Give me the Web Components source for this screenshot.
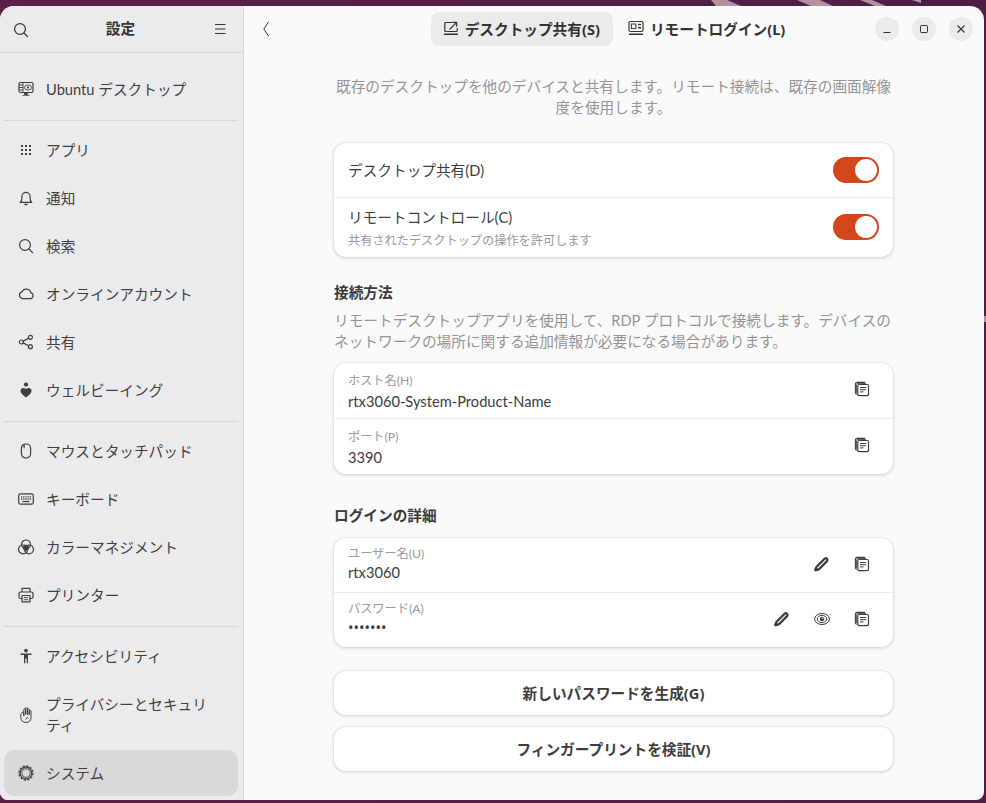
<!DOCTYPE html>
<html lang="ja"><head><meta charset="utf-8"><title>設定</title>
<style>
html,body{margin:0;padding:0;height:803px;overflow:hidden;background:#5a2048}
body{font-family:"Lato","Noto Sans CJK JP",sans-serif;font-size:14.67px;color:#3d3d3d}
</style></head><body>
<desk-top>
<settings-window>
  <side-bar slot="side">
    <nav-group>
      <nav-item icon="desktop">Ubuntu デスクトップ</nav-item>
    </nav-group>
    <nav-group>
      <nav-item icon="apps">アプリ</nav-item>
      <nav-item icon="bell">通知</nav-item>
      <nav-item icon="search">検索</nav-item>
      <nav-item icon="cloud">オンラインアカウント</nav-item>
      <nav-item icon="share">共有</nav-item>
      <nav-item icon="wellbeing">ウェルビーイング</nav-item>
    </nav-group>
    <nav-group>
      <nav-item icon="mouse">マウスとタッチパッド</nav-item>
      <nav-item icon="keyboard">キーボード</nav-item>
      <nav-item icon="color">カラーマネジメント</nav-item>
      <nav-item icon="printer">プリンター</nav-item>
    </nav-group>
    <nav-group last>
      <nav-item icon="a11y">アクセシビリティ</nav-item>
      <nav-item icon="hand" tall>プライバシーとセキュリティ</nav-item>
      <nav-item icon="gear" selected>システム</nav-item>
    </nav-group>
  </side-bar>
  <content-head slot="head"></content-head>
  <content-pane slot="main">
    <muted-text center>既存のデスクトップを他のデバイスと共有します。リモート接続は、既存の画面解像度を使用します。</muted-text>
    <pref-card style="margin-top:25px">
      <pref-row h="54"><span>デスクトップ共有(D)</span><tog-switch slot="end"></tog-switch></pref-row>
      <pref-row h="59"><span>リモートコントロール(C)</span><small-note>共有されたデスクトップの操作を許可します</small-note><tog-switch slot="end" style="margin-bottom:1px"></tog-switch></pref-row>
    </pref-card>
    <sec-title style="margin-top:25px">接続方法</sec-title>
    <muted-text style="margin-top:7px">リモートデスクトップアプリを使用して、RDP プロトコルで接続します。デバイスのネットワークの場所に関する追加情報が必要になる場合があります。</muted-text>
    <pref-card style="margin-top:11px">
      <pref-row h="55" field pt="4" es="4"><field-label>ホスト名(H)</field-label><field-value>rtx3060-System-Product-Name</field-value><icon-btn slot="end" icon="copy"></icon-btn></pref-row>
      <pref-row h="55" field pt="4" es="4"><field-label>ポート(P)</field-label><field-value>3390</field-value><icon-btn slot="end" icon="copy"></icon-btn></pref-row>
    </pref-card>
    <sec-title style="margin-top:31px">ログインの詳細</sec-title>
    <pref-card style="margin-top:12px">
      <pref-row h="54" field pb="2" es="2"><field-label>ユーザー名(U)</field-label><field-value style="margin-top:1px">rtx3060</field-value><icon-btn slot="end" icon="pencil"></icon-btn><icon-btn slot="end" icon="copy"></icon-btn></pref-row>
      <pref-row h="54" field pb="2" es="2"><field-label>パスワード(A)</field-label><field-value style="margin-top:1px;font-family:'Noto Sans',sans-serif">•••••••</field-value><icon-btn slot="end" icon="pencil"></icon-btn><icon-btn slot="end" icon="eye"></icon-btn><icon-btn slot="end" icon="copy"></icon-btn></pref-row>
    </pref-card>
    <wide-button style="margin-top:24px">新しいパスワードを生成(G)</wide-button>
    <wide-button style="margin-top:12px">フィンガープリントを検証(V)</wide-button>
  </content-pane>
</settings-window>
</desk-top>
<script>
const S='fill="none" stroke="currentColor" stroke-width="1.2" stroke-linecap="round" stroke-linejoin="round"';
const ICONS={
search:`<circle cx="7" cy="7" r="5.4" ${S}/><path d="M11 11l3.6 3.6" ${S}/>`,
menu:`<path d="M3 3.500h10.500M3 8h10.500M3 12.500h10.500" fill="none" stroke="currentColor" stroke-width="1.100"/>`,
desktop:`<rect x="1" y="1.500" width="14" height="10" rx="1.500" ${S}/><path d="M5 1.500v10M1 4h4M1 6.500h4M1 9h4" fill="none" stroke="currentColor" stroke-width=".9"/><ellipse cx="10" cy="6.500" rx="3.600" ry="2.500" fill="none" stroke="currentColor" stroke-width=".9"/><circle cx="10" cy="6.500" r="1.100" fill="currentColor"/><path d="M6.500 12h3v1.600h-3zM4.500 14.400h7" fill="currentColor" stroke="currentColor" stroke-width=".8"/>`,
apps:`<g fill="currentColor"><rect x="3" y="3" width="2" height="2"/><rect x="7" y="3" width="2" height="2"/><rect x="11" y="3" width="2" height="2"/><rect x="3" y="7" width="2" height="2"/><rect x="7" y="7" width="2" height="2"/><rect x="11" y="7" width="2" height="2"/><rect x="3" y="11" width="2" height="2"/><rect x="7" y="11" width="2" height="2"/><rect x="11" y="11" width="2" height="2"/></g>`,
bell:`<path d="M2.200 12.400c1.300-1 1.700-2.400 1.700-4.400V6.500a4.100 4.100 0 0 1 8.200 0V8c0 2 .4 3.400 1.700 4.400z" ${S}/><path d="M6.400 14.500h3.200" fill="none" stroke="currentColor" stroke-width="1.600"/>`,
cloud:`<path d="M4.300 12.600h8a2.900 2.900 0 0 0 .6-5.700A4.700 4.700 0 0 0 4 5.800 3.500 3.500 0 0 0 4.300 12.600z" ${S}/>`,
share:`<circle cx="3.400" cy="8" r="2" ${S}/><circle cx="12.400" cy="3.300" r="2" ${S}/><circle cx="12.400" cy="12.700" r="2" ${S}/><path d="M5.200 7.100l5.400-2.900M5.200 8.900l5.400 2.900" ${S}/>`,
wellbeing:`<circle cx="8" cy="2.600" r="2.100" fill="currentColor"/><path d="M8 15.500C5 13.300 2.500 11.300 2.500 8.800 2.500 6 6.300 5.200 8 7.200c1.700-2 5.500-1.200 5.500 1.600 0 2.500-2.500 4.500-5.500 6.700z" fill="currentColor"/>`,
mouse:`<rect x="3.400" y="1" width="9.200" height="14" rx="4.400" ${S}/><path d="M6.200 1.300c0 2-.2 2.700 0 3.600" ${S}/>`,
keyboard:`<rect x=".7" y="2.800" width="14.600" height="10.400" rx="1.800" ${S}/><path d="M3 5.800h10M3 8h10" stroke="currentColor" stroke-width="1.300" stroke-dasharray="1 .8"/><path d="M4.500 10.500h7" stroke="currentColor" stroke-width="1.300"/>`,
color:`<circle cx="8" cy="5.400" r="4.400" ${S}/><circle cx="5" cy="10.400" r="4.400" ${S}/><circle cx="11" cy="10.400" r="4.400" ${S}/><circle cx="8" cy="8.800" r="3" fill="currentColor"/>`,
printer:`<path d="M4 5V1.400h8V5M4 11.500H2.500A1.500 1.500 0 0 1 1 10V6.500A1.500 1.500 0 0 1 2.500 5h11A1.500 1.500 0 0 1 15 6.500V10a1.500 1.500 0 0 1-1.500 1.500H12" ${S}/><rect x="4" y="8.500" width="8" height="6.300" ${S}/><path d="M5.800 10.600h4.400M5.800 12.700h4.400" fill="none" stroke="currentColor" stroke-width=".9"/>`,
a11y:`<circle cx="8" cy="2.600" r="1.900" fill="currentColor"/><path d="M2.500 5.600h11v1.300H10v8.300H8.700v-4.600H7.300v4.600H6V6.900H2.500z" fill="currentColor"/>`,
hand:`<path d="M2.800 7.200v3.500c0 2.900 2.200 4.800 5.200 4.800s5-2 5-4.900V4.300a.9.9 0 0 0-1.800 0V7.800 2.600a.9.9 0 0 0-1.800 0v5 -6a.9.9 0 0 0-1.800 0v6 -5a.9.9 0 0 0-1.800 0v6.400 -2.800a.9.9 0 0 0-2 0z" fill="none" stroke="currentColor" stroke-width="1" stroke-linejoin="round"/><path d="M7.600 12.400c1-.7 1.700-1.500 2-2.600" fill="none" stroke="currentColor" stroke-width="1"/>`,
gear:`<circle cx="8" cy="8" r="7" fill="none" stroke="currentColor" stroke-width="1.300" stroke-dasharray="2.300 1.360"/><circle cx="8" cy="8" r="5.900" fill="none" stroke="currentColor" stroke-width="1.200"/><circle cx="8" cy="8" r="4.300" fill="none" stroke="currentColor" stroke-width=".9"/>`,
back:`<path d="M8.500 1L3.800 8l4.700 7" fill="none" stroke="currentColor" stroke-width="1" stroke-linejoin="miter"/>`,
tabshare:`<path d="M14.200 8.500v2a1 1 0 0 1-1 1H2.800a1 1 0 0 1-1-1v-7a1 1 0 0 1 1-1h6" ${S}/><path d="M1 14.300h14" fill="none" stroke="currentColor" stroke-width="1.500"/><path d="M7 9l6.200-6.200M9.800 2.300h3.900v3.900" ${S}/>`,
tablogin:`<rect x="1" y="1.500" width="14" height="10" rx="1.500" ${S}/><rect x="3.400" y="4" width="4.400" height="4.600" fill="none" stroke="currentColor" stroke-width="1"/><path d="M10 4.500h3M10 7.800h3" stroke="currentColor" stroke-width="1.500"/><path d="M1 14.300h14" fill="none" stroke="currentColor" stroke-width="1.500"/>`,
min:`<path d="M4.500 11.500h7" fill="none" stroke="currentColor" stroke-width="1"/>`,
max:`<rect x="4.500" y="4.500" width="7" height="7" rx=".8" fill="none" stroke="currentColor" stroke-width="1"/>`,
close:`<path d="M4.500 4.500l7 7M11.500 4.500l-7 7" fill="none" stroke="currentColor" stroke-width="1.100"/>`,
copy:`<path d="M3 13.300A1.600 1.600 0 0 1 1.400 11.700V3A1.600 1.600 0 0 1 3 1.400h8" fill="none" stroke="currentColor" stroke-width="1.100"/><path d="M2.600 12V3.600A1.200 1.200 0 0 1 3.800 2.400h8.200" fill="none" stroke="currentColor" stroke-width=".9"/><rect x="3.800" y="3.500" width="10.700" height="11.200" rx="1.400" fill="#fff" stroke="currentColor" stroke-width="1.200"/><path d="M6 6.500h6.200M6 8.700h6.200M6 10.900h3.500" stroke="currentColor" stroke-width="1"/>`,
pencil:`<path d="M2.600 10.800l7.800-7.800c.8-.8 2-.8 2.600-.2s.6 1.800-.2 2.600l-7.800 7.800-3.200.8c-.4.100-.6-.1-.5-.5z" fill="none" stroke="currentColor" stroke-width="2.300"/><path d="M1.300 11.300l3.400 3.400-3.700.9z" fill="currentColor"/>`,
eye:`<ellipse cx="8" cy="8" rx="7.400" ry="5.500" fill="none" stroke="currentColor" stroke-width="1"/><ellipse cx="8" cy="8" rx="4.800" ry="3.600" fill="none" stroke="currentColor" stroke-width="1"/><circle cx="8" cy="8" r="2.200" fill="currentColor"/><circle cx="8.700" cy="7.300" r=".7" fill="#fff"/>`
};
customElements.define('x-icon',class extends HTMLElement{
  static get observedAttributes(){return['name'];}
  constructor(){super();this.attachShadow({mode:'open'}).innerHTML=`<style>:host{display:inline-flex;width:16px;height:16px;flex:none}svg{width:100%;height:100%;display:block}</style><svg viewBox="0 0 16 16"></svg>`;}
  attributeChangedCallback(n,o,v){this.shadowRoot.querySelector('svg').innerHTML=ICONS[v]||'';}
});
function def(tag,html,setup){
  customElements.define(tag,class extends HTMLElement{
    constructor(){super();this.attachShadow({mode:'open'}).innerHTML=html;}
    connectedCallback(){if(setup&&!this._s){this._s=1;setup(this);}}
  });
}
const BOLD='font-weight:700;font-family:"Noto Sans","Noto Sans CJK JP",sans-serif';
def('desk-top',`<style>
:host{display:block;position:relative;width:986px;height:803px;box-sizing:border-box;padding:6px 2px 3px 0;background:linear-gradient(90deg,#5c2149,#4e1e46)}
.wall{position:absolute;inset:0;width:986px;height:803px}
.top{position:relative;height:794px}
</style>
<svg class="wall" viewBox="0 0 986 803"><g fill="#b5909f"><polygon points="711,0 727,0 741,6 716,6"/><polygon points="797,0 820,0 833,6 811,6"/><polygon points="860,0 872,0 886,6 875,6"/><polygon points="912,0 921,0 921,3"/></g><polygon points="984,316 986,316 986,322 984,322" fill="#b08ca0"/></svg>
<div class="top"><slot></slot></div>`);

def('settings-window',`<style>
:host{display:grid;grid-template-columns:244px 1fr;grid-template-rows:46px 1fr;height:100%;border-radius:14px 14px 8px 8px;overflow:hidden;background:#fafafb}
::slotted([slot=side]){grid-row:1/3}
</style><slot name="side"></slot><slot name="head"></slot><slot name="main"></slot>`);

def('side-bar',`<style>
:host{display:flex;flex-direction:column;background:#ebebed;border-right:1px solid #dadadc;box-sizing:border-box;width:244px;height:100%}
.h{height:47px;box-sizing:border-box;border-bottom:1px solid #d6d6d8;display:grid;grid-template-columns:40px 1fr 44px;align-items:center;color:#333}
.h b{text-align:center;font-weight:700;font-size:14.67px;padding-left:2px;line-height:1}
.h x-icon{justify-self:center;margin-top:1px}
.h x-icon.a{margin-left:2px}.h x-icon.b{margin-right:3px;margin-top:0}
.l{padding:13px 5px 0 4px;display:flex;flex-direction:column}
</style>
<div class="h"><x-icon class="a" name="search"></x-icon><b>設定</b><x-icon class="b" name="menu"></x-icon></div>
<div class="l"><slot></slot></div>`);

def('nav-group',`<style>
:host{display:flex;flex-direction:column;gap:2px;padding-bottom:8px;margin-bottom:6px;border-bottom:1px solid #d7d7d9}
:host([last]){border:0;padding:0;margin:0}
</style><slot></slot>`);

def('nav-item',`<style>
:host{display:flex;align-items:center;gap:12px;height:46px;padding:0 20px 0 14px;box-sizing:border-box;border-radius:10px;color:#3f3f41;line-height:21px}
:host([tall]){height:67px}
:host([selected]){background:#d9d9db}
span{flex:1}
</style><x-icon></x-icon><span><slot></slot></span>`,
 el=>{el.shadowRoot.querySelector('x-icon').setAttribute('name',el.getAttribute('icon'));});

def('content-head',`<style>
:host{display:grid;grid-template-columns:1fr auto 1fr;align-items:center;height:46px;color:#333}
.l{padding-left:16px;display:flex}
.tabs{display:flex;gap:3px}
.t{display:flex;align-items:center;gap:6px;height:34px;box-sizing:border-box;padding:0 12px 2px;border-radius:8px;${BOLD};font-size:14.67px}
.t.on{background:#ebebed;padding-right:13px}
.r{display:flex;justify-content:flex-end;gap:13px;padding-right:11px}
.c{width:24px;height:24px;border-radius:50%;background:#ebebed;display:flex;align-items:center;justify-content:center;color:#333}
</style>
<div class="l"><x-icon name="back"></x-icon></div>
<div class="tabs"><div class="t on"><x-icon name="tabshare"></x-icon>デスクトップ共有(S)</div><div class="t"><x-icon name="tablogin"></x-icon>リモートログイン(L)</div></div>
<div class="r"><div class="c"><x-icon name="min"></x-icon></div><div class="c"><x-icon name="max"></x-icon></div><div class="c"><x-icon name="close"></x-icon></div></div>`);

def('content-pane',`<style>:host{display:flex;flex-direction:column;width:559px;margin:0 0 0 90px;padding-top:24px;box-sizing:border-box}</style><slot></slot>`);
def('muted-text',`<style>:host{display:block;color:#949496;line-height:21px}:host([center]){text-align:center}</style><slot></slot>`);
def('sec-title',`<style>:host{display:block;font-weight:700;line-height:21px;color:#3a3a3a}</style><slot></slot>`);
def('pref-card',`<style>:host{display:block;background:#fff;border-radius:12px;box-shadow:0 0 0 1px rgba(0,0,0,.03),0 1px 3px 1px rgba(0,0,0,.1);overflow:hidden}
::slotted(pref-row:not(:last-child)){border-bottom:1px solid #ececee}</style><slot></slot>`);
def('pref-row',`<style>
:host{display:flex;align-items:center;padding:0 14px;color:#3d3d3d}
.m{flex:1;display:flex;flex-direction:column;justify-content:center;line-height:21px;min-width:0;box-sizing:border-box}
.e{display:flex;gap:8px;align-items:center}
:host([field]) .e{margin-right:1px}
</style><div class="m"><slot></slot></div><div class="e"><slot name="end"></slot></div>`,
 el=>{el.style.height=el.getAttribute('h')+'px';const m=el.shadowRoot.querySelector('.m');
   if(el.hasAttribute('pt'))m.style.paddingTop=el.getAttribute('pt')+'px';
   if(el.hasAttribute('pb'))m.style.paddingBottom=el.getAttribute('pb')+'px';
   if(el.hasAttribute('es'))el.shadowRoot.querySelector('.e').style.paddingBottom=el.getAttribute('es')+'px';});
def('small-note',`<style>:host{display:block;font-size:12.2px;line-height:16px;color:#9a9a9c;margin-top:5px}</style><slot></slot>`);
def('field-label',`<style>:host{display:block;font-size:12.2px;line-height:15px;color:#9a9a9c}</style><slot></slot>`);
def('field-value',`<style>:host{display:block;line-height:21px;margin-top:3px;color:#3d3d3d}</style><slot></slot>`);
def('icon-btn',`<style>:host{display:flex;width:32px;height:32px;align-items:center;justify-content:center;color:#3d3d3d}</style><x-icon></x-icon>`,
 el=>{el.shadowRoot.querySelector('x-icon').setAttribute('name',el.getAttribute('icon'));});
def('tog-switch',`<style>:host{display:block;width:46px;height:26px;border-radius:13px;background:#d2461a;position:relative}
i{position:absolute;right:2px;top:2px;width:22px;height:22px;border-radius:50%;background:#fff}</style><i></i>`);
def('wide-button',`<style>:host{display:flex;align-items:center;justify-content:center;height:44px;box-sizing:border-box;padding-bottom:2px;background:#fff;border-radius:12px;${BOLD};color:#3d3d3d;box-shadow:0 0 0 1px rgba(0,0,0,.03),0 1px 3px 1px rgba(0,0,0,.1)}</style><slot></slot>`);
</script>
</body></html>
